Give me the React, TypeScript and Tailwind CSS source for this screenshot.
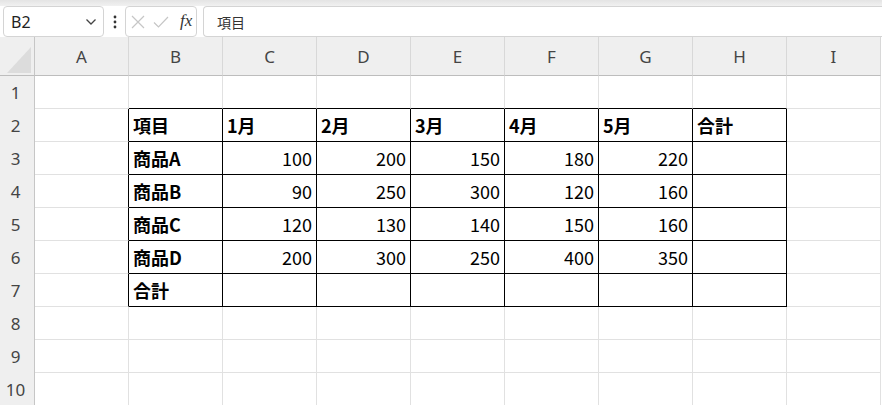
import React from "react";

const COLS = ["A", "B", "C", "D", "E", "F", "G", "H", "I"];
const DATA: Record<number, (string | number)[]> = {
  2: ["項目", "1月", "2月", "3月", "4月", "5月", "合計"],
  3: ["商品A", 100, 200, 150, 180, 220, ""],
  4: ["商品B", 90, 250, 300, 120, 160, ""],
  5: ["商品C", 120, 130, 140, 150, 160, ""],
  6: ["商品D", 200, 300, 250, 400, 350, ""],
  7: ["合計", "", "", "", "", "", ""],
};

const cellFont = {
  fontFamily: '"Noto Sans CJK JP", "Noto Sans", sans-serif',
};

function Cell({ r, c }: { r: number; c: number }) {
  const rightBlack = r >= 2 && r <= 7 && c >= 0 && c <= 7;
  const bottomBlack = r >= 1 && r <= 7 && c >= 1 && c <= 7;
  const rowData = DATA[r];
  let content: React.ReactNode = null;
  let isNum = false;
  if (rowData && c >= 1 && c <= 7) {
    const v = rowData[c - 1];
    if (typeof v === "number") {
      isNum = true;
      content = v;
    } else if (v) {
      content = v;
    }
  }
  const bold = !isNum && content !== null;
  return (
    <div
      className={
        "h-[33px] border-r border-b flex items-center px-[4px] text-[18px] leading-none text-black overflow-hidden whitespace-nowrap " +
        (rightBlack ? "border-r-black " : "border-r-[#e1e1e1] ") +
        (bottomBlack ? "border-b-black " : "border-b-[#e1e1e1] ") +
        (isNum ? "justify-end " : "justify-start ") +
        (bold ? "font-bold" : "font-normal")
      }
      style={cellFont}
    >
      {content}
    </div>
  );
}

export default function App() {
  const rows = [1, 2, 3, 4, 5, 6, 7, 8, 9, 10];
  return (
    <div className="w-[882px] h-[405px] overflow-hidden bg-white relative">
      {/* top strip */}
      <div className="h-[6px] bg-gradient-to-b from-[#e4e4e4] to-[#f1f1f1]" />
      {/* formula bar */}
      <div className="h-[31px] flex items-stretch bg-white">
        <div className="ml-[3px] w-[101px] border border-[#d4d4d4] rounded-[4px] flex items-center justify-between pl-[7px] pr-[6px] bg-white">
          <span
            className="text-[16px] text-[#222] leading-none"
            style={{ fontFamily: '"Noto Sans", "Open Sans", sans-serif' }}
          >
            B2
          </span>
          <svg width="12" height="8" viewBox="0 0 12 8" className="mt-[1px]">
            <path d="M1.5 1.5 L6 6 L10.5 1.5" fill="none" stroke="#444" strokeWidth="1.3" />
          </svg>
        </div>
        <div className="w-[21px] flex items-center justify-center">
          <svg width="4" height="14" viewBox="0 0 4 14">
            <circle cx="2" cy="2" r="1.4" fill="#333" />
            <circle cx="2" cy="7" r="1.4" fill="#333" />
            <circle cx="2" cy="12" r="1.4" fill="#333" />
          </svg>
        </div>
        <div className="w-[72px] border border-[#d4d4d4] rounded-[4px] flex items-center pl-[5px] bg-white">
          <svg width="14" height="14" viewBox="0 0 14 14">
            <path d="M1 1 L13 13 M13 1 L1 13" stroke="#c6c6c6" strokeWidth="1.2" fill="none" />
          </svg>
          <svg width="16" height="14" viewBox="0 0 16 14" className="ml-[8px]">
            <path d="M1 7.5 L5.5 12 L15 2" stroke="#c6c6c6" strokeWidth="1.2" fill="none" />
          </svg>
          <span
            className="ml-[11px] text-[17px] italic text-[#333] leading-none -mt-[3px]"
            style={{ fontFamily: '"Liberation Serif", "DejaVu Serif", serif' }}
          >
            fx
          </span>
        </div>
        <div className="ml-[6px] flex-1 border-t border-b border-l border-[#d4d4d4] rounded-l-[4px] flex items-center pl-[13px] bg-white">
          <span
            className="text-[14px] text-[#333] leading-none"
            style={{ fontFamily: '"Noto Sans CJK JP", "Noto Sans", sans-serif' }}
          >
            項目
          </span>
        </div>
      </div>
      {/* grid */}
      <div className="grid grid-cols-[35px_repeat(9,94px)]">
        {/* header row */}
        <div className="h-[39px] bg-[#efefef] border-r border-b border-r-[#c6c6c6] border-b-[#bdbdbd] relative">
          <svg width="34" height="38" viewBox="0 0 34 38" className="absolute left-0 top-0">
            <polygon points="7,36 31,36 31,10" fill="#dcdcdc" />
          </svg>
        </div>
        {COLS.map((c) => (
          <div
            key={c}
            className="h-[39px] bg-[#efefef] border-r border-b border-r-[#d8d8d8] border-b-[#bdbdbd] flex items-center justify-center text-[17px] text-[#444] leading-none"
            style={{ fontFamily: '"Noto Sans", "Open Sans", sans-serif' }}
          >
            {c}
          </div>
        ))}
        {rows.map((r) => (
          <React.Fragment key={r}>
            <div
              className="h-[33px] bg-[#efefef] border-r border-r-[#c6c6c6] flex items-center justify-center pr-[3px] text-[17px] text-[#444] leading-none"
              style={{ fontFamily: '"Noto Sans", "Open Sans", sans-serif' }}
            >
              {r}
            </div>
            {COLS.map((_, ci) => (
              <Cell key={ci} r={r} c={ci} />
            ))}
          </React.Fragment>
        ))}
      </div>
    </div>
  );
}
